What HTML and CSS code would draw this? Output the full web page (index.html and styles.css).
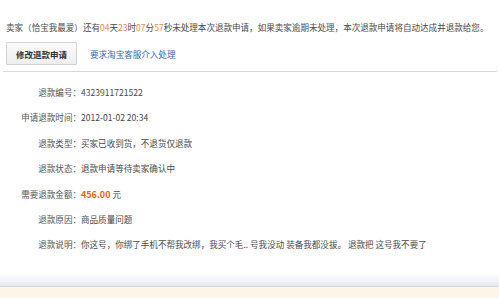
FILE: index.html
```html
<!DOCTYPE html>
<html lang="zh-CN">
<head>
<meta charset="utf-8">
<title>退款详情</title>
<link rel="stylesheet" href="styles.css">
</head>
<body>
<div class="page">
  <p class="notice">卖家（恰宝我最爱）还有<span class="num">04</span>天<span class="num">23</span>时<span class="num">07</span>分<span class="num">57</span>秒未处理本次退款申请，如果卖家逾期未处理，本次退款申请将自动达成并退款给您。</p>
  <div class="actions">
    <button class="btn">修改退款申请</button>
    <a class="link" href="#">要求淘宝客服介入处理</a>
  </div>
  <div class="divider"></div>
  <dl class="fields">
    <dt>退款编号：</dt><dd>4323911721522</dd>
    <dt>申请退款时间：</dt><dd>2012-01-02 20:34</dd>
    <dt>退款类型：</dt><dd>买家已收到货，不退货仅退款</dd>
    <dt>退款状态：</dt><dd>退款申请等待卖家确认中</dd>
    <dt>需要退款金额：</dt><dd><strong class="amount">456.00</strong> 元</dd>
    <dt>退款原因：</dt><dd>商品质量问题</dd>
    <dt>退款说明：</dt><dd>你这号，你绑了手机不帮我改绑，我买个毛.. 号我没动 装备我都没拔。 退款把 这号我不要了</dd>
  </dl>
  <div class="footer">
    <div class="fade"></div>
    <div class="band"></div>
    <div class="cream"></div>
  </div>
</div>
</body>
</html>
```
FILE: styles.css
```css
html, body {
  margin: 0;
  padding: 0;
  background: #fff;
}
.page {
  display: flex;
  flex-direction: column;
  min-height: 100vh;
  font-family: "Noto Sans CJK SC", "Noto Sans", sans-serif;
  font-size: 8.55px;
  color: #4a4a4a;
}
.notice {
  margin: 21px 0 0 6px;
  line-height: 13px;
  white-space: nowrap;
}
.num {
  color: #f08a3c;
}
.actions {
  display: flex;
  align-items: center;
  gap: 13px;
  margin: 8px 0 0 6px;
}
.btn {
  height: 23px;
  width: 71px;
  padding: 0;
  font-family: inherit;
  font-size: 8.5px;
  font-weight: bold;
  color: #333;
  background: linear-gradient(#fbfbfb, #eeeeee);
  border: 1px solid #d2d2d2;
  border-radius: 1px;
}
.link {
  color: #3465b4;
  text-decoration: none;
}
.divider {
  margin: 6px 2px 0 3px;
  border-top: 1px solid #d9d9d9;
}
.fields {
  display: grid;
  grid-template-columns: 60px 1fr;
  margin: 8px 0 0 21px;
  line-height: 25.4px;
}
.fields dt {
  text-align: right;
  color: #555;
  white-space: nowrap;
}
.fields dd {
  margin: 0;
  white-space: nowrap;
}
.amount {
  color: #e8650f;
  font-weight: bold;
  font-size: 9px;
}
.footer {
  margin-top: auto;
}
.fade {
  height: 10px;
  background: linear-gradient(#fff, #eef0f3);
}
.band {
  height: 3px;
  background: #e7eaef;
  border-bottom: 1px solid #d4d6da;
}
.cream {
  height: 11px;
  background: #fdf5e8;
}
```
